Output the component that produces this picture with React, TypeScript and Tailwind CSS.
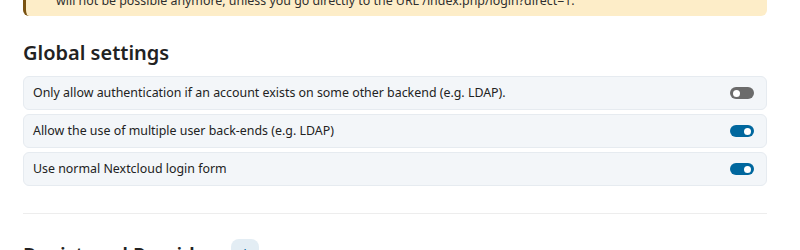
import React from "react";

function Toggle({ on }: { on: boolean }) {
  return (
    <div
      className={
        "w-[24px] h-[12px] rounded-full flex items-center px-[3px] " +
        (on ? "bg-[#00679e] justify-end" : "bg-[#6b6b6b] justify-start")
      }
    >
      <div className="w-[7px] h-[7px] rounded-full bg-white" />
    </div>
  );
}

function Row({ label, on }: { label: string; on: boolean }) {
  return (
    <div className="h-[34px] flex items-center justify-between pl-[9px] pr-[12px] bg-[#f3f6f9] border border-[#e6ebf0] rounded-[6px]">
      <span className="text-[12.4px] text-[#222222]">{label}</span>
      <Toggle on={on} />
    </div>
  );
}

export default function App() {
  return (
    <div
      className="w-[800px] h-[250px] overflow-hidden bg-white"
      style={{ fontFamily: '"Noto Sans", "Open Sans", sans-serif' }}
    >
      <div className="ml-[23px] w-[744px]">
        <div className="mt-[-12px] h-[28px] bg-[#fdedc8] border-l-[3px] border-[#7a5312] rounded-b-[6px] flex items-end pl-[30px] pb-[7px]">
          <span className="text-[12.4px] text-[#2f2f2f] leading-[16px]">
            will not be possible anymore, unless you go directly to the URL /index.php/login?direct=1.
          </span>
        </div>
        <h2 className="mt-[24px] text-[20px] font-semibold text-[#222222] leading-[26px]">
          Global settings
        </h2>
        <div className="mt-[10px] flex flex-col gap-[4px]">
          <Row label="Only allow authentication if an account exists on some other backend (e.g. LDAP)." on={false} />
          <Row label="Allow the use of multiple user back-ends (e.g. LDAP)" on={true} />
          <Row label="Use normal Nextcloud login form" on={true} />
        </div>
        <div className="mt-[27px] h-px bg-[#ededed]" />
        <div className="mt-[28px] flex items-start gap-[6px]">
          <h2 className="text-[20px] font-semibold text-[#222222] leading-[26px]">Registered Providers</h2>
          <div className="mt-[-3px] w-[28px] h-[28px] rounded-[8px] bg-[#e3edf4] flex items-center justify-center">
            <span className="text-[16px] text-[#00679e] leading-none">+</span>
          </div>
        </div>
      </div>
    </div>
  );
}
